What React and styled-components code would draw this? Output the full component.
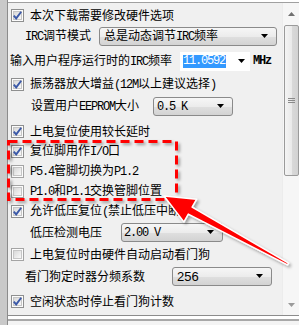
import React from 'react';
import styled, { createGlobalStyle } from 'styled-components';

const Global = createGlobalStyle`
  html, body { margin: 0; padding: 0; background: #ffffff; }
  body { font-family: "Noto Sans CJK SC", "Noto Sans", sans-serif; }
`;

const Screen = styled.div`
  position: relative;
  width: 299px;
  height: 325px;
  overflow: hidden;
  background: #ffffff;
  display: flex;
`;

const LeftFrame = styled.div`
  width: 7px;
  background: #c9c9c9;
  border-right: 1px solid #8c8c8c;
  flex: none;
`;

const Main = styled.div`
  flex: 1;
  display: flex;
  flex-direction: column;
  padding-top: 2px;
`;

const Panel = styled.div`
  height: 314px;
  box-sizing: border-box;
  border-top: 1px solid #a0a0a0;
  border-bottom: 1px solid #8c8c8c;
  background: #f0f0f0;
  display: flex;
`;

const BottomStrip = styled.div`
  margin-top: 3px;
  border-top: 2px solid #a8a8a8;
  flex: 1;
  background: #f4f4f4;
`;

const Content = styled.div`
  flex: 1;
  display: flex;
  flex-direction: column;
  padding-left: 1px;
`;

const Row = styled.div`
  display: flex;
  align-items: center;
  height: 20px;
  margin-top: ${p => p.mt || 0}px;
  padding-left: ${p => p.pl ?? 2}px;
  font-size: 12px;
  color: #000;
  white-space: nowrap;
`;

const Text = styled.span`
  margin-left: 6px;
  line-height: 20px;
`;

const Label = styled.span`
  width: ${p => p.w}px;
  flex: none;
  line-height: 20px;
`;

const Lat = styled.span`
  font-family: "Liberation Mono", monospace;
  font-size: 12px;
  letter-spacing: -1.2px;
`;

const Combo = styled.div`
  box-sizing: border-box;
  width: ${p => p.w}px;
  height: 19px;
  flex: none;
  border: 1px solid #8a8a8a;
  border-radius: 3px;
  background: linear-gradient(#f6f6f6 0%, #ececec 50%, #dfdfdf 51%, #d3d3d3 100%);
  display: flex;
  align-items: center;
  justify-content: space-between;
  padding: 0 8px 0 ${p => p.pl}px;
  font-size: 12px;
  line-height: 17px;
  color: #000;
`;

const ComboValue = styled.span`
  font-family: ${p => (p.sans ? '"Liberation Sans", Arial, sans-serif' : 'inherit')};
  font-size: ${p => (p.sans ? '13px' : '12px')};
`;

const EditBox = styled.div`
  box-sizing: border-box;
  width: 70px;
  height: 19px;
  flex: none;
  background: #ffffff;
  display: flex;
  align-items: center;
  justify-content: space-between;
  padding: 0 5px 0 3px;
`;

const Selected = styled.span`
  background: #3399ff;
  color: #ffffff;
  line-height: 13px;
  font-family: "Liberation Mono", monospace;
  font-size: 12px;
  letter-spacing: -1.2px;
  padding-right: 1px;
`;

const Unit = styled.span`
  margin-left: 3px;
  font-family: "Liberation Mono", monospace;
  font-size: 12px;
  letter-spacing: -1.2px;
  font-weight: bold;
`;

const ScrollBar = styled.div`
  width: 17px;
  flex: none;
  background: #f6f6f6;
  border-left: 1px solid #ececec;
  box-sizing: border-box;
  display: flex;
  flex-direction: column;
  align-items: center;
`;

const ScrollBtn = styled.div`
  height: ${p => p.h}px;
  width: 100%;
  display: flex;
  align-items: center;
  justify-content: center;
`;

const Thumb = styled.div`
  width: 15px;
  height: 151px;
  box-sizing: border-box;
  border: 1px solid #9a9a9a;
  border-radius: 2px;
  background: linear-gradient(90deg, #f4f4f4 0%, #eaeaea 50%, #d9d9d9 51%, #d2d2d2 100%);
  display: flex;
  align-items: center;
  justify-content: center;
`;

const Track = styled.div`
  flex: 1;
`;

const Overlay = styled.svg`
  position: absolute;
  left: 0;
  top: 0;
  pointer-events: none;
`;

function Tri() {
  return (
    <svg width="7" height="4" viewBox="0 0 7 4">
      <polygon points="0,0 7,0 3.5,4" fill="#000" />
    </svg>
  );
}

function Check({ checked }) {
  return (
    <svg width="13" height="13" viewBox="0 0 13 13" style={{ flex: 'none' }}>
      <defs>
        <linearGradient id="cbg" x1="0" y1="0" x2="1" y2="1">
          <stop offset="0" stopColor="#d6d6d6" />
          <stop offset="1" stopColor="#fbfbfb" />
        </linearGradient>
      </defs>
      <rect x="0.5" y="0.5" width="12" height="12" fill="#fcfcfc" stroke={checked ? '#8e8f8f' : '#a4a4a4'} />
      <rect x="2.5" y="2.5" width="8" height="8" fill="url(#cbg)" stroke="#c6c6c6" />
      {checked && (
        <path d="M2.8 6.6 L5.2 9.4 L10.2 2.8" fill="none" stroke="#3b59a8" strokeWidth="1.9" strokeLinejoin="miter" />
      )}
    </svg>
  );
}

function CheckRow({ mt, checked, children }) {
  return (
    <Row mt={mt}>
      <Check checked={checked} />
      <Text>{children}</Text>
    </Row>
  );
}

export default function App() {
  return (
    <>
      <Global />
      <Screen>
        <LeftFrame />
        <Main>
          <Panel>
            <Content>
              <CheckRow mt={2} checked>本次下载需要修改硬件选项</CheckRow>
              <Row mt={1} pl={16}>
                <Label w={74}><Lat>IRC</Lat>调节模式</Label>
                <Combo w={178} pl={4}>
                  <span>总是动态调节<Lat>IRC</Lat>频率</span>
                  <Tri />
                </Combo>
              </Row>
              <Row mt={5} pl={1}>
                <Label w={170}>输入用户程序运行时的<Lat>IRC</Lat>频率</Label>
                <EditBox>
                  <Selected>11.0592</Selected>
                  <Tri />
                </EditBox>
                <Unit>MHz</Unit>
              </Row>
              <CheckRow mt={3} checked>振荡器放大增益<Lat>(12M</Lat>以上建议选择<Lat>)</Lat></CheckRow>
              <Row mt={2} pl={22}>
                <Label w={122}>设置用户<Lat>EEPROM</Lat>大小</Label>
                <Combo w={80} pl={3}>
                  <ComboValue><Lat>0.5 K</Lat></ComboValue>
                  <Tri />
                </Combo>
              </Row>
              <CheckRow mt={5} checked>上电复位使用较长延时</CheckRow>
              <CheckRow checked>复位脚用作<Lat>I/O</Lat>口</CheckRow>
              <CheckRow><Lat>P5.4</Lat>管脚切换为<Lat>P1.2</Lat></CheckRow>
              <CheckRow><Lat>P1.0</Lat>和<Lat>P1.1</Lat>交换管脚位置</CheckRow>
              <CheckRow checked>允许低压复位<Lat>(</Lat>禁止低压中断<Lat>)</Lat></CheckRow>
              <Row mt={1} pl={21}>
                <Label w={91}>低压检测电压</Label>
                <Combo w={102} pl={2}>
                  <ComboValue><Lat>2.00 V</Lat></ComboValue>
                  <Tri />
                </Combo>
              </Row>
              <CheckRow mt={2}>上电复位时由硬件自动启动看门狗</CheckRow>
              <Row mt={2} pl={16}>
                <Label w={147}>看门狗定时器分频系数</Label>
                <Combo w={100} pl={4}>
                  <ComboValue sans>256</ComboValue>
                  <Tri />
                </Combo>
              </Row>
              <CheckRow mt={5} checked>空闲状态时停止看门狗计数</CheckRow>
            </Content>
            <ScrollBar>
              <ScrollBtn h={22}>
                <svg width="7" height="4" viewBox="0 0 7 4">
                  <polygon points="0,4 7,4 3.5,0" fill="#707070" />
                </svg>
              </ScrollBtn>
              <Thumb>
                <svg width="7" height="7" viewBox="0 0 7 7">
                  <path d="M0 1.5H7M0 3.5H7M0 5.5H7" stroke="#8a8a8a" strokeWidth="1" />
                </svg>
              </Thumb>
              <Track />
              <ScrollBtn h={20}>
                <svg width="7" height="4" viewBox="0 0 7 4">
                  <polygon points="0,0 7,0 3.5,4" fill="#9a9a9a" />
                </svg>
              </ScrollBtn>
            </ScrollBar>
          </Panel>
          <BottomStrip />
        </Main>
        <Overlay width="299" height="325" viewBox="0 0 299 325">
          <defs>
            <filter id="sh" x="-20%" y="-20%" width="140%" height="140%">
              <feDropShadow dx="2" dy="2" stdDeviation="1.6" floodColor="#000" floodOpacity="0.35" />
            </filter>
          </defs>
          <rect x="8.5" y="141.5" width="168" height="58" fill="none" stroke="#ff0000" strokeWidth="3" strokeDasharray="9 5" filter="url(#sh)" />
          <polygon
            points="164,196 196.5,199.3 192.1,207.1 288.5,263.1 287.5,264.9 188.3,214.1 183.9,221.9"
            fill="#ff0000"
            stroke="#ffffff"
            strokeWidth="1.5"
            strokeLinejoin="round"
            filter="url(#sh)"
          />
        </Overlay>
      </Screen>
    </>
  );
}
